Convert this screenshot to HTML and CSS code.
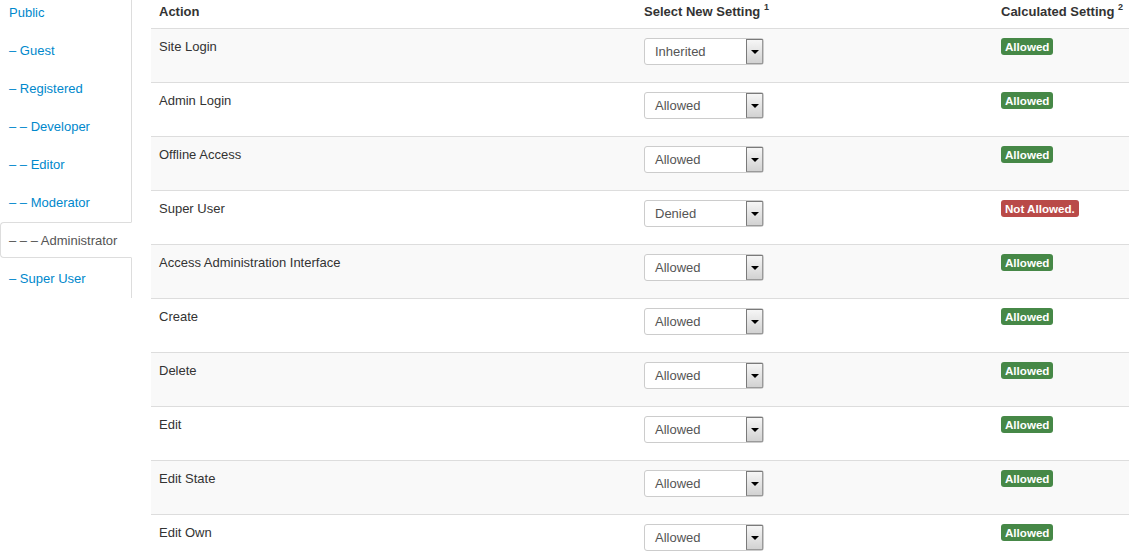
FILE: index.html
```html
<!DOCTYPE html>
<html>
<head>
<meta charset="utf-8">
<link rel="stylesheet" href="styles.css">
</head>
<body>
<div class="wrap">
  <ul class="tabs">
    <li><a href="#">Public</a></li>
    <li><a href="#">– Guest</a></li>
    <li><a href="#">– Registered</a></li>
    <li><a href="#">– – Developer</a></li>
    <li><a href="#">– – Editor</a></li>
    <li><a href="#">– – Moderator</a></li>
    <li class="active"><a href="#">– – – Administrator</a></li>
    <li><a href="#">– Super User</a></li>
  </ul>
  <table class="perms">
    <colgroup><col class="c1"><col class="c2"><col class="c3"></colgroup>
    <thead>
      <tr><th>Action</th><th>Select New Setting <sup>1</sup></th><th>Calculated Setting <sup>2</sup></th></tr>
    </thead>
    <tbody>
      <tr><td>Site Login</td><td><div class="select"><span class="val">Inherited</span><span class="arrow"></span></div></td><td><span class="badge ok">Allowed</span></td></tr>
      <tr><td>Admin Login</td><td><div class="select"><span class="val">Allowed</span><span class="arrow"></span></div></td><td><span class="badge ok">Allowed</span></td></tr>
      <tr><td>Offline Access</td><td><div class="select"><span class="val">Allowed</span><span class="arrow"></span></div></td><td><span class="badge ok">Allowed</span></td></tr>
      <tr><td>Super User</td><td><div class="select"><span class="val">Denied</span><span class="arrow"></span></div></td><td><span class="badge no">Not Allowed.</span></td></tr>
      <tr><td>Access Administration Interface</td><td><div class="select"><span class="val">Allowed</span><span class="arrow"></span></div></td><td><span class="badge ok">Allowed</span></td></tr>
      <tr><td>Create</td><td><div class="select"><span class="val">Allowed</span><span class="arrow"></span></div></td><td><span class="badge ok">Allowed</span></td></tr>
      <tr><td>Delete</td><td><div class="select"><span class="val">Allowed</span><span class="arrow"></span></div></td><td><span class="badge ok">Allowed</span></td></tr>
      <tr><td>Edit</td><td><div class="select"><span class="val">Allowed</span><span class="arrow"></span></div></td><td><span class="badge ok">Allowed</span></td></tr>
      <tr><td>Edit State</td><td><div class="select"><span class="val">Allowed</span><span class="arrow"></span></div></td><td><span class="badge ok">Allowed</span></td></tr>
      <tr><td>Edit Own</td><td><div class="select"><span class="val">Allowed</span><span class="arrow"></span></div></td><td><span class="badge ok">Allowed</span></td></tr>
    </tbody>
  </table>
</div>
</body>
</html>
```
FILE: styles.css
```css
html, body {
  margin: 0;
  padding: 0;
  background: #fff;
  overflow: hidden;
}
body {
  font-family: "Liberation Sans", Arial, sans-serif;
  font-size: 13px;
  line-height: 18px;
  color: #333;
}
.wrap {
  display: flex;
  align-items: flex-start;
  gap: 19px;
  margin-top: -6px;
}
.tabs {
  list-style: none;
  margin: 0;
  padding: 0;
  width: 131px;
  flex: 0 0 131px;
  border-right: 1px solid #ddd;
}
.tabs li a {
  display: block;
  padding: 9px 8px 7px;
  line-height: 18px;
  border: 1px solid transparent;
  border-radius: 4px 0 0 4px;
  margin-right: -1px;
  margin-bottom: 2px;
  color: #0088cc;
  text-decoration: none;
  white-space: nowrap;
}
.tabs li.active a {
  color: #555;
  background: #fff;
  border-color: #ddd transparent #ddd #ddd;
}
.perms {
  border-collapse: collapse;
  table-layout: fixed;
  width: 1042px;
  flex: 0 0 1042px;
}
.c1 { width: 485px; }
.c2 { width: 357px; }
.c3 { width: 200px; }
.perms th, .perms td {
  padding: 9px 8px 7px;
  text-align: left;
  vertical-align: top;
  line-height: 18px;
  white-space: nowrap;
}
.perms th {
  font-weight: bold;
  vertical-align: bottom;
}
.perms td {
  border-top: 1px solid #ddd;
}
.perms tbody tr:nth-child(odd) td {
  background: #f9f9f9;
}
sup {
  font-size: 9px;
  line-height: 0;
  position: relative;
  top: -1px;
  vertical-align: super;
}
.select {
  box-sizing: border-box;
  width: 120px;
  height: 27px;
  margin: 0 0 10px 0;
  border: 1px solid #ccc;
  border-radius: 3px;
  background: #fff;
  display: flex;
  align-items: stretch;
}
.select .val {
  flex: 1;
  padding-left: 10px;
  line-height: 25px;
  color: #555;
}
.select .arrow {
  box-sizing: border-box;
  width: 17px;
  margin: 0;
  border: 1px solid #7a7a7a;
  border-right-color: #9a9a9a;
  border-bottom-color: #9a9a9a;
  background: linear-gradient(#f6f6f6, #d2d2d2);
  display: flex;
  align-items: center;
  justify-content: center;
}
.select .arrow::after {
  content: "";
  width: 0;
  height: 0;
  border-left: 4px solid transparent;
  border-right: 4px solid transparent;
  border-top: 4px solid #000;
}
.badge {
  display: inline-block;
  margin-top: 0;
  padding: 2px 4px;
  font-size: 11.6px;
  font-weight: bold;
  line-height: 13px;
  color: #fff;
  border-radius: 3px;
  vertical-align: top;
}
.badge.ok { background: #468847; }
.badge.no { background: #b94a48; }
```
